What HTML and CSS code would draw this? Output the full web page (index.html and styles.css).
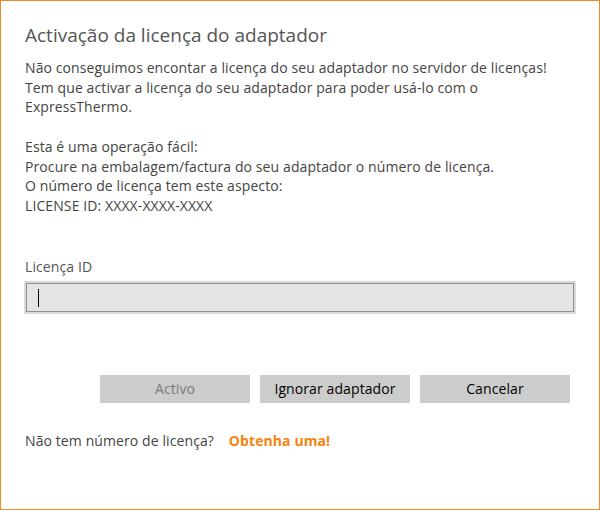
FILE: index.html
```html
<!DOCTYPE html>
<html lang="pt">
<head>
    <meta charset="UTF-8">
    <title>Activação da licença do adaptador</title>
    <link rel="stylesheet" href="styles.css">
</head>
<body>
    <div class="dialog">
        <h1 class="title">Activação da licença do adaptador</h1>

        <p class="message">
            Não conseguimos encontar a licença do seu adaptador no servidor de licenças!<br>
            Tem que activar a licença do seu adaptador para poder usá-lo com o<br>
            ExpressThermo.<br>
            <br>
            Esta é uma operação fácil:<br>
            Procure na embalagem/factura do seu adaptador o número de licença.<br>
            O número de licença tem este aspecto:<br>
            LICENSE ID: XXXX-XXXX-XXXX
        </p>

        <div class="field">
            <label for="licenseId">Licença ID</label>
            <div class="textbox">
                <span class="caret"></span>
                <input type="text" id="licenseId">
            </div>
        </div>

        <div class="buttons">
            <button class="btn" disabled>Activo</button>
            <button class="btn">Ignorar adaptador</button>
            <button class="btn">Cancelar</button>
        </div>

        <p class="get-license">
            Não tem número de licença?
            <a href="#" class="link">Obtenha uma!</a>
        </p>
    </div>
</body>
</html>
```

FILE: styles.css
```css
* {
    margin: 0;
    padding: 0;
    box-sizing: border-box;
}
body {
    font-family: 'Open Sans', 'Noto Sans', sans-serif;
    background: #fff;
    color: #444;
    width: 600px;
    height: 510px;
}
.dialog {
    width: 600px;
    height: 510px;
    border: 1px solid #f08a24;
    padding: 20px 24px 0 24px;
    letter-spacing: 0.1px;
}
.title {
    font-size: 19px;
    font-weight: 400;
    line-height: 28px;
    letter-spacing: 0;
    color: #555;
}
.message {
    margin-top: 9px;
    font-size: 14px;
    line-height: 19.7px;
    color: #444;
}
.field {
    margin-top: 41px;
}
.field label {
    display: block;
    font-size: 14px;
    line-height: 20px;
    color: #555;
}
.textbox {
    position: relative;
    margin-top: 4px;
    margin-left: -1px;
    width: 552px;
    height: 33px;
    border: 2px solid #d9d9d9;
    background: #8f8f8f;
    padding: 1px;
}
.textbox input {
    display: block;
    width: 100%;
    height: 100%;
    border: none;
    outline: none;
    background: #e4e4e4;
}
.caret {
    position: absolute;
    left: 12px;
    top: 6px;
    width: 1px;
    height: 18px;
    background: #000;
}
.buttons {
    display: flex;
    justify-content: flex-end;
    gap: 10px;
    margin-top: 61px;
    padding-right: 5px;
}
.btn {
    width: 150px;
    height: 28px;
    border: none;
    background: #ccc;
    font-family: inherit;
    font-size: 14px;
    letter-spacing: 0.1px;
    color: #000;
}
.btn:disabled {
    color: #7a7a7a;
}
.get-license {
    margin-top: 28px;
    font-size: 14px;
    line-height: 20px;
    color: #444;
}
.link {
    margin-left: 11px;
    color: #f7830f;
    font-weight: 700;
    text-decoration: none;
}
```
